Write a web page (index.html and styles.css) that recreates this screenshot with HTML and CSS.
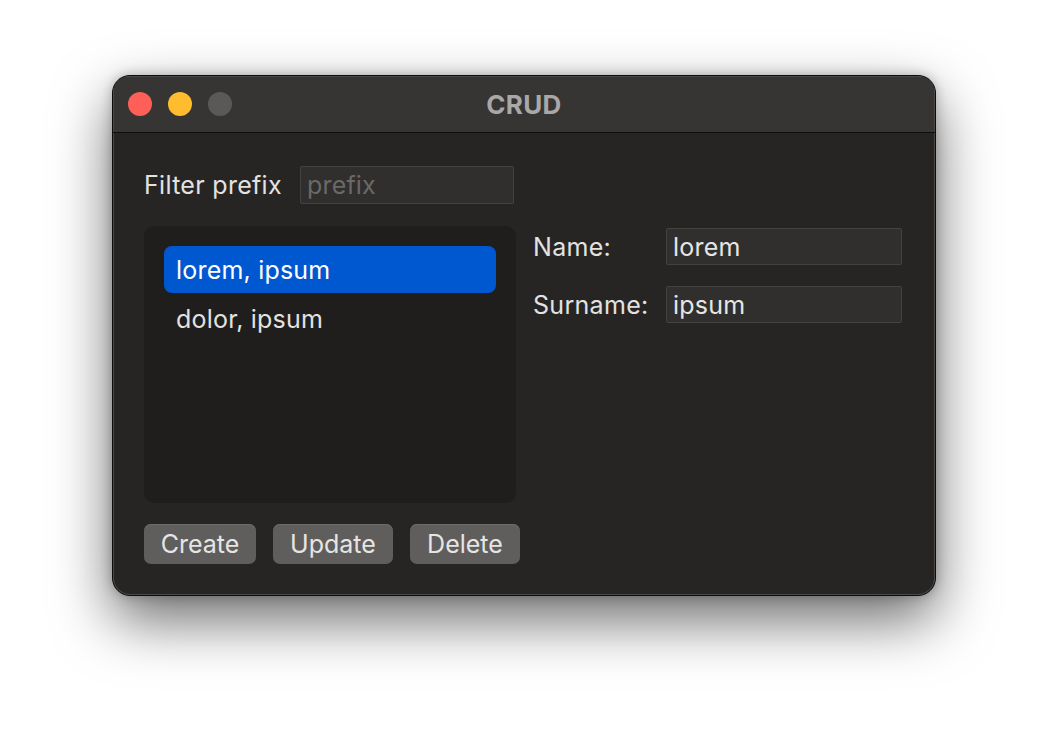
FILE: index.html
```html
<!DOCTYPE html>
<html>
<head>
<meta charset="utf-8">
<link rel="stylesheet" href="styles.css">
</head>
<body>
<div class="window">
  <div class="titlebar">
    <div class="lights">
      <span class="light red"></span>
      <span class="light yellow"></span>
      <span class="light gray"></span>
    </div>
    <div class="title">CRUD</div>
  </div>
  <div class="content">
    <div class="filter-row">
      <span class="label">Filter prefix</span>
      <div class="field filter-field placeholder">prefix</div>
    </div>
    <div class="main">
      <div class="left">
        <div class="list">
          <div class="row selected">lorem, ipsum</div>
          <div class="row">dolor, ipsum</div>
        </div>
        <div class="buttons">
          <div class="btn btn-create">Create</div>
          <div class="btn btn-update">Update</div>
          <div class="btn btn-delete">Delete</div>
        </div>
      </div>
      <div class="form">
        <div class="form-row">
          <span class="label form-label">Name:</span>
          <div class="field form-field">lorem</div>
        </div>
        <div class="form-row">
          <span class="label form-label">Surname:</span>
          <div class="field form-field">ipsum</div>
        </div>
      </div>
    </div>
  </div>
</div>
</body>
</html>
```
FILE: styles.css
```css
html, body {
  margin: 0;
  padding: 0;
}
body {
  width: 1048px;
  height: 744px;
  background: #ffffff;
  font-family: Inter, "Noto Sans", sans-serif;
  padding: 75px 0 0 112px;
  box-sizing: border-box;
  overflow: hidden;
}
.window {
  width: 824px;
  height: 521px;
  box-sizing: border-box;
  border-radius: 18px;
  background: #262524;
  border: 1px solid #0c0c0c;
  box-shadow: inset 0 0 0 1px #4a4948, 0 24px 58px rgba(0, 0, 0, 0.58), 0 0 12px rgba(0,0,0,0.25);
  overflow: hidden;
  display: flex;
  flex-direction: column;
}
.titlebar {
  height: 56px;
  background: #363534;
  border-bottom: 1px solid #0e0e0e;
  box-shadow: inset 0 1px 0 #4a4948, inset 1px 0 0 #4a4948, inset -1px 0 0 #4a4948;
  display: flex;
  align-items: center;
  position: relative;
  flex: none;
}
.lights {
  display: flex;
  gap: 16px;
  padding-left: 15px;
}
.light {
  width: 24px;
  height: 24px;
  border-radius: 50%;
  display: block;
}
.red { background: #fe5f57; }
.yellow { background: #febc2e; }
.gray { background: #5a5958; }
.title {
  position: absolute;
  left: 0;
  right: 0;
  top: 0;
  bottom: 0;
  display: flex;
  align-items: center;
  justify-content: center;
  color: #a9a8a7;
  font-weight: 700;
  font-size: 26px;
  letter-spacing: 0.3px;
}
.content {
  flex: 1;
  padding: 33px 33px 0 31px;
  box-shadow: inset 1px 0 0 #4a4948, inset -1px 0 0 #4a4948, inset 0 -1px 0 #4a4948;
}
.label {
  color: #e3e2e1;
  font-size: 25px;
  letter-spacing: 0.3px;
}
.filter-row {
  display: flex;
  align-items: center;
  gap: 18px;
  height: 38px;
}
.field {
  height: 38px;
  box-sizing: border-box;
  background: #302f2e;
  border: 1px solid #434241;
  border-radius: 2px;
  color: #e6e5e4;
  font-size: 25px;
  letter-spacing: 0.2px;
  padding: 0 6px;
  display: flex;
  align-items: center;
}
.filter-field {
  width: 214px;
}
.placeholder {
  color: #6a6968;
}
.main {
  display: flex;
  margin-top: 22px;
  gap: 13px;
}
.left {
  display: flex;
  flex-direction: column;
  width: 376px;
}
.list {
  width: 372px;
  height: 277px;
  background: #1f1e1d;
  border-radius: 10px;
  padding: 20px;
  box-sizing: border-box;
}
.row {
  height: 47px;
  padding-left: 12px;
  display: flex;
  align-items: center;
  color: #e3e2e1;
  font-size: 25px;
  letter-spacing: 0.2px;
  border-radius: 8px;
  margin-bottom: 2px;
}
.row.selected {
  background: #0058d0;
  color: #ffffff;
}
.buttons {
  display: flex;
  gap: 17px;
  margin-top: 21px;
}
.btn {
  height: 40px;
  box-sizing: border-box;
  background: #5f5e5d;
  border-radius: 7px;
  color: #e6e5e4;
  font-size: 25px;
  display: flex;
  align-items: center;
  justify-content: center;
  box-shadow: inset 0 1px 0 #6d6c6b;
}
.btn-create { width: 112px; }
.btn-update { width: 120px; }
.btn-delete { width: 110px; }
.form {
  display: flex;
  flex-direction: column;
  gap: 21px;
  padding-top: 2px;
}
.form-row {
  display: flex;
  align-items: center;
  height: 37px;
}
.form-label {
  width: 133px;
}
.form-field {
  width: 236px;
  height: 37px;
}
```
